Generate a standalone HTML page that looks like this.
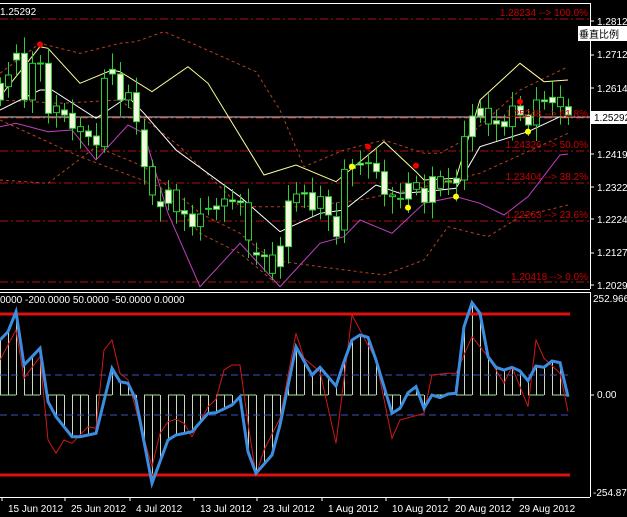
<!DOCTYPE html><html><head><meta charset="utf-8"><style>
body{margin:0;background:#000;width:627px;height:517px;overflow:hidden}
svg{display:block}
text{font-family:"Liberation Sans","Noto Sans CJK SC",sans-serif;font-size:10px}
</style></head><body>
<svg id="s" width="627" height="517" xmlns="http://www.w3.org/2000/svg">
<rect width="627" height="517" fill="#000"/>
<line x1="0" y1="3.5" x2="590" y2="3.5" stroke="#fff"/>
<line x1="590.5" y1="3" x2="590.5" y2="289" stroke="#fff"/>
<line x1="0" y1="289.5" x2="590" y2="289.5" stroke="#fff"/>
<line x1="0" y1="292.5" x2="590" y2="292.5" stroke="#fff"/>
<line x1="590.5" y1="292" x2="590.5" y2="497" stroke="#fff"/>
<line x1="0" y1="497.5" x2="590" y2="497.5" stroke="#fff"/>
<g id="g"></g>
<g fill="#c00" font-size="10">
<text x="588" y="16" text-anchor="end">1.28234 --&gt; 100.0%</text>
<text x="588" y="117" text-anchor="end">1.25248 --&gt; 61.8%</text>
<text x="588" y="148" text-anchor="end">1.24326 --&gt; 50.0%</text>
<text x="588" y="180" text-anchor="end">1.23404 --&gt; 38.2%</text>
<text x="588" y="218" text-anchor="end">1.22263 --&gt; 23.6%</text>
<text x="588" y="280" text-anchor="end">1.20418 --&gt; 0.0%</text>
</g>
<g fill="#fff">
<text x="0" y="15">1.25292</text>
<text x="0" y="303">0000 -200.0000 50.0000 -50.0000 0.0000</text>
<text x="597" y="25">1.28120</text>
<text x="597" y="58">1.27120</text>
<text x="597" y="92">1.26145</text>
<text x="597" y="158">1.24195</text>
<text x="597" y="191">1.23220</text>
<text x="597" y="223">1.22245</text>
<text x="597" y="256">1.21270</text>
<text x="597" y="289">1.20295</text>
<text x="593" y="302">252.966</text>
<text x="597" y="398">0.00</text>
<text x="593" y="496">-254.875</text>
</g>
<g stroke="#fff"><line x1="591" y1="21" x2="594" y2="21"/><line x1="591" y1="55" x2="594" y2="55"/><line x1="591" y1="88" x2="594" y2="88"/><line x1="591" y1="154" x2="594" y2="154"/><line x1="591" y1="187" x2="594" y2="187"/><line x1="591" y1="219" x2="594" y2="219"/><line x1="591" y1="253" x2="594" y2="253"/><line x1="591" y1="285" x2="594" y2="285"/><line x1="591" y1="395" x2="594" y2="395"/></g>
<rect x="591" y="111" width="36" height="13" fill="#fff"/>
<text x="594" y="121" fill="#000">1.25292</text>
<rect x="578" y="26" width="49" height="15" fill="#fff"/>
<text x="579" y="38" fill="#000" font-size="12">垂直比例</text>
<g fill="#fff">
<text x="8" y="512">15 Jun 2012</text><text x="71" y="512">25 Jun 2012</text><text x="136" y="512">4 Jul 2012</text><text x="200" y="512">13 Jul 2012</text><text x="263" y="512">23 Jul 2012</text><text x="328" y="512">1 Aug 2012</text><text x="392" y="512">10 Aug 2012</text><text x="455" y="512">20 Aug 2012</text><text x="519" y="512">29 Aug 2012</text>
</g>
<g stroke="#fff"><line x1="2" y1="498" x2="2" y2="501"/><line x1="65" y1="498" x2="65" y2="501"/><line x1="130" y1="498" x2="130" y2="501"/><line x1="194" y1="498" x2="194" y2="501"/><line x1="257" y1="498" x2="257" y2="501"/><line x1="322" y1="498" x2="322" y2="501"/><line x1="386" y1="498" x2="386" y2="501"/><line x1="449" y1="498" x2="449" y2="501"/><line x1="513" y1="498" x2="513" y2="501"/></g>
</svg>
<script>
var g=document.getElementById('g'),h='';var SX=2.5;
function P(a,off){return a.map(function(p){return (p[0]/SX).toFixed(1)+','+(p[1]/3+(off||0)).toFixed(1)}).join(' ')}
function L(a,c,w,d,off){h+='<polyline fill="none" stroke="'+c+'" stroke-width="'+w+'" '+(d?'stroke-dasharray="'+d+'"':'')+' points="'+P(a,off)+'"/>';}
[19,118,151,183,221,282].forEach(function(y){h+='<line x1="0" y1="'+y+'" x2="590" y2="'+y+'" stroke="#b01010" stroke-dasharray="8,3,2,3"/>'});
h+='<line x1="0" y1="117" x2="590" y2="117" stroke="#ccc"/>';
L([[0,220],[100,130],[200,160],[300,130],[340,125],[410,95],[480,130],[640,215],[700,330],[760,500],[860,450],[960,420],[1060,460],[1100,460],[1160,420],[1300,270],[1420,200]],'#b84020',1,'3,3');
L([[0,540],[120,550],[240,440],[360,500],[500,640],[600,700],[680,780],[800,800],[960,825],[1060,780],[1120,680],[1220,710],[1300,650],[1420,615]],'#b84020',1,'3,3');
L([[0,360],[200,470],[400,560],[500,700],[600,760],[680,840]],'#b84020',1,'3,3');
L([[0,300],[150,310],[300,300],[450,440],[600,620],[760,620],[900,600],[1060,560],[1200,520],[1420,400]],'#b84020',1,'3,3');
L([[0,290],[100,140],[120,145],[200,250],[280,210],[300,215],[380,275],[470,200],[520,250],[660,525],[740,495],[840,545],[960,425],[1040,515],[1060,540],[1140,535],[1200,300],[1300,190],[1360,245],[1420,240]],'#ffff99',1);
L([[0,330],[100,270],[130,270],[240,355],[320,290],[360,340],[440,450],[600,590],[700,695],[800,640],[860,630],[940,555],[1000,580],[1060,575],[1140,565],[1200,440],[1320,395],[1400,350],[1420,350]],'#fff',1);
L([[0,380],[40,370],[120,395],[180,390],[240,480],[320,375],[360,400],[420,640],[500,860],[600,730],[700,860],[800,730],[860,710],[900,660],[980,700],[1060,610],[1140,590],[1200,610],[1260,645],[1320,590],[1400,465],[1420,462]],'#c040c0',1);
var C=[[0,250,300],[20,225,260],[40,160,180],[60,160,300],[80,190,300],[100,189,191],[120,190,340],[140,318,338],[160,330,345],[180,340,385],[200,380,395],[220,393,410],[240,408,435],[260,235,440],[280,208,222],[300,222,300],[320,278,300],[340,278,365],[360,390,500],[380,500,585],[400,605,620],[420,570,610],[440,570,635],[460,632,642],[480,642,680],[500,642,680],[520,625,628],[540,618,628],[560,597,618],[580,600,605],[600,603,608],[620,608,720],[640,758,765],[660,765,770],[680,765,820],[700,738,800],[720,603,740],[740,582,608],[760,578,582],[780,578,630],[800,590,625],[820,590,645],[840,650,710],[860,508,690],[880,495,505],[900,490,495],[920,488,491],[940,490,515],[960,515,583],[980,585,590],[1000,595,598],[1020,550,597],[1040,548,568],[1060,565,607],[1080,530,607],[1100,530,565],[1120,543,546],[1140,535,550],[1160,410,540],[1180,348,410],[1200,325,348],[1220,325,372],[1240,362,372],[1260,365,380],[1280,318,380],[1300,318,345],[1320,345,375],[1340,300,375],[1360,300,305],[1380,292,308],[1400,292,320],[1420,320,345]];
C.forEach(function(c,i){var x=Math.round(c[0]/SX)+0.5,t=c[1]/3,b=c[2]/3,hi=t-6-(i*7%11),lo=b+6+(i*5%13);
h+='<line x1="'+x+'" y1="'+hi+'" x2="'+x+'" y2="'+lo+'" stroke="#33cc33"/>';
var up=(i%3!=1);h+='<rect x="'+(x-3)+'" y="'+t+'" width="6" height="'+Math.max(1,b-t)+'" fill="'+(up?'#f4f8e0':'#000')+'" stroke="#33cc33" stroke-width="1"/>';});
[[100,133],[920,440],[1040,497],[1300,305]].forEach(function(p){h+='<circle cx="'+p[0]/SX+'" cy="'+p[1]/3+'" r="3" fill="#e00"/>'});
[[880,500],[1020,623],[1140,590],[1320,395]].forEach(function(p){h+='<circle cx="'+p[0]/SX+'" cy="'+p[1]/3+'" r="3" fill="#ff0"/>'});
var B=[[0,180],[20,155],[40,95],[60,255],[100,205],[120,365],[140,410],[180,470],[200,470],[240,460],[280,265],[300,305],[320,310],[340,360],[380,610],[420,480],[440,465],[480,455],[520,400],[540,398],[580,375],[600,350],[620,515],[640,580],[680,525],[700,435],[740,200],[780,285],[800,262],[840,318],[860,245],[880,180],[900,165],[920,172],[940,240],[980,400],[1000,385],[1020,338],[1040,320],[1060,385],[1080,345],[1100,353],[1120,342],[1140,340],[1160,140],[1180,68],[1200,100],[1220,230],[1240,262],[1260,270],[1280,262],[1300,273],[1320,302],[1340,258],[1360,262],[1380,243],[1400,248],[1420,350]];
for(var x=0;x<=1420;x+=20){var v=null;for(var k=0;k<B.length-1;k++){if(B[k][0]<=x&&B[k+1][0]>=x){v=B[k][1]+(B[k+1][1]-B[k][1])*(x-B[k][0])/(B[k+1][0]-B[k][0]);break;}}
h+='<line x1="'+(Math.round(x/SX)+0.5)+'" y1="395" x2="'+(Math.round(x/SX)+0.5)+'" y2="'+(v/3+280)+'" stroke="#c8dcc0"/>';}
for(var x=0;x<1420;x+=60){h+='<line x1="'+(x/SX)+'" y1="395" x2="'+(x/SX+16)+'" y2="395" stroke="#a8dca0"/>';}
[375,415].forEach(function(y){h+='<line x1="0" y1="'+y+'" x2="570" y2="'+y+'" stroke="#4050c0" stroke-dasharray="7,4"/>'});
h+='<line x1="0" y1="314" x2="570" y2="314" stroke="#e01010" stroke-width="3"/>';
h+='<line x1="0" y1="475" x2="570" y2="475" stroke="#e01010" stroke-width="3"/>';
L([[0,240],[40,150],[60,295],[100,230],[120,480],[140,520],[160,480],[180,490],[200,465],[220,440],[240,445],[260,210],[280,180],[300,280],[320,300],[340,390],[380,560],[400,460],[420,425],[440,418],[460,430],[480,470],[520,380],[540,358],[560,270],[580,255],[600,255],[620,430],[640,585],[660,510],[700,415],[740,160],[760,235],[800,275],[840,490],[880,105],[940,240],[980,475],[1000,420],[1060,400],[1080,285],[1120,280],[1140,280],[1180,170],[1220,230],[1260,310],[1280,260],[1320,380],[1340,180],[1360,235],[1400,280],[1420,395]],'#d01818',1,null,280);
L(B,'#3c8ce0',3,null,280);
g.innerHTML=h;
</script>
</body></html>
